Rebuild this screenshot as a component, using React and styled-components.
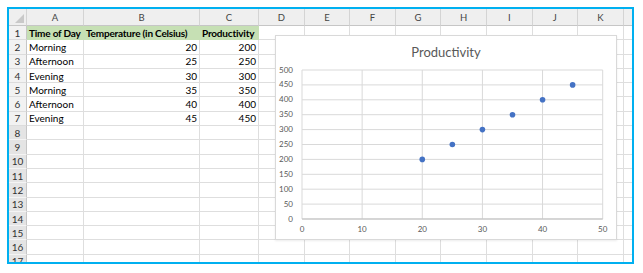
import React from 'react';
import styled, { createGlobalStyle } from 'styled-components';

const GlobalStyle = createGlobalStyle`
  body {
    margin: 0;
    background: #ffffff;
    font-family: Lato, "Liberation Sans", sans-serif;
  }
`;

const columns = ['A', 'B', 'C', 'D', 'E', 'F', 'G', 'H', 'I', 'J', 'K', ''];

const rows = [
  ['Time of Day', 'Temperature (in Celsius)', 'Productivity'],
  ['Morning', 20, 200],
  ['Afternoon', 25, 250],
  ['Evening', 30, 300],
  ['Morning', 35, 350],
  ['Afternoon', 40, 400],
  ['Evening', 45, 450],
];

const Frame = styled.div`
  position: relative;
  margin: 7px;
  width: 627px;
  height: 257px;
  box-sizing: border-box;
  border: 2px solid #00b0f0;
  overflow: hidden;
  background: #ffffff;
`;

const Sheet = styled.div`
  display: grid;
  grid-template-columns: 18px 57px 116px 59px repeat(8, 45.6px) 40px;
  grid-template-rows: 17px repeat(17, 14.3px);
`;

const Corner = styled.div`
  position: relative;
  background: #efefef;
  border-right: 1px solid #d4d4d4;
  border-bottom: 1px solid #c6c6c6;
  box-sizing: border-box;

  &::after {
    content: '';
    position: absolute;
    right: 2px;
    bottom: 2px;
    border-left: 9px solid transparent;
    border-bottom: 9px solid #c9c9c9;
  }
`;

const ColHead = styled.div`
  display: flex;
  align-items: center;
  justify-content: center;
  background: #efefef;
  border-right: 1px solid #d4d4d4;
  border-bottom: 1px solid #c6c6c6;
  box-sizing: border-box;
  font-size: 9.5px;
  color: #444444;
`;

const RowHead = styled.div`
  display: flex;
  align-items: center;
  justify-content: center;
  background: ${(p) => (p.$shade ? '#e4e4e4' : '#f2f2f2')};
  border-right: 1px solid #c6c6c6;
  border-bottom: 1px solid ${(p) => (p.$shade ? '#f4f4f4' : '#dcdcdc')};
  box-sizing: border-box;
  font-size: 10px;
  color: #333333;
`;

const Cell = styled.div`
  display: flex;
  align-items: center;
  justify-content: ${(p) => (p.$num ? 'flex-end' : 'flex-start')};
  padding: 0 2px;
  background: ${(p) => (p.$fill ? '#c6e0b4' : '#ffffff')};
  border-right: 1px solid ${(p) => (p.$fill ? '#c6e0b4' : '#dedede')};
  border-bottom: 1px solid ${(p) => (p.$fill ? '#c6e0b4' : '#dedede')};
  box-sizing: border-box;
  font-size: 10px;
  font-weight: ${(p) => (p.$bold ? 700 : 400)};
  letter-spacing: ${(p) => (p.$bold ? '-0.2px' : '0')};
  color: #000000;
  white-space: nowrap;
  overflow: hidden;
`;

const ChartBox = styled.div`
  position: absolute;
  left: 266px;
  top: 26px;
  width: 342px;
  height: 205px;
  box-sizing: border-box;
  background: #ffffff;
  border: 1px solid #d9d9d9;
  box-shadow: 0 1px 2px rgba(0, 0, 0, 0.08);
  display: flex;
  flex-direction: column;
`;

const ChartTitle = styled.div`
  height: 29px;
  box-sizing: border-box;
  padding-top: 8px;
  line-height: 16px;
  text-align: center;
  font-size: 13px;
  color: #595959;
`;

const points = [
  [20, 200],
  [25, 250],
  [30, 300],
  [35, 350],
  [40, 400],
  [45, 450],
];

const PL = 26;
const PT = 5;
const PW = 300.7;
const PH = 149;
const sx = (v) => PL + (v / 50) * PW;
const sy = (v) => PT + PH - (v / 500) * PH;

const ScatterChart = () => {
  const yTicks = [0, 50, 100, 150, 200, 250, 300, 350, 400, 450, 500];
  const xTicks = [0, 10, 20, 30, 40, 50];
  return (
    <svg width="340" height="173" viewBox="0 0 340 173">
      {yTicks.map((t) => (
        <line key={'h' + t} x1={PL} x2={PL + PW} y1={sy(t)} y2={sy(t)} stroke="#d9d9d9" strokeWidth="1" />
      ))}
      {xTicks.map((t) => (
        <line key={'v' + t} x1={sx(t)} x2={sx(t)} y1={PT} y2={PT + PH} stroke="#d9d9d9" strokeWidth="1" />
      ))}
      <line x1={PL} x2={PL + PW} y1={PT + PH} y2={PT + PH} stroke="#bfbfbf" strokeWidth="1" />
      {yTicks.map((t) => (
        <text key={'yl' + t} x={17} y={sy(t) + 0.5} textAnchor="end" dominantBaseline="middle" fontSize="8" fill="#595959" fontFamily="Lato, sans-serif">
          {t}
        </text>
      ))}
      {xTicks.map((t) => (
        <text key={'xl' + t} x={sx(t)} y={165} textAnchor="middle" dominantBaseline="middle" fontSize="8" fill="#595959" fontFamily="Lato, sans-serif">
          {t}
        </text>
      ))}
      {points.map(([x, y]) => (
        <circle key={x} cx={sx(x)} cy={sy(y)} r="2.8" fill="#4472c4" />
      ))}
    </svg>
  );
};

const App = () => {
  const body = [];
  for (let r = 1; r <= 17; r++) {
    const data = rows[r - 1];
    body.push(
      <RowHead key={'rh' + r} $shade={r > 7}>
        {r}
      </RowHead>
    );
    columns.forEach((c, i) => {
      const v = data && i < 3 ? data[i] : '';
      const header = r === 1 && i < 3;
      body.push(
        <Cell key={r + '-' + i} $fill={header} $bold={header} $num={typeof v === 'number'}>
          {v}
        </Cell>
      );
    });
  }

  return (
    <>
      <GlobalStyle />
      <Frame>
        <Sheet>
          <Corner />
          {columns.map((c, i) => (
            <ColHead key={'c' + i}>{c}</ColHead>
          ))}
          {body}
        </Sheet>
        <ChartBox>
          <ChartTitle>Productivity</ChartTitle>
          <ScatterChart />
        </ChartBox>
      </Frame>
    </>
  );
};

export default App;
